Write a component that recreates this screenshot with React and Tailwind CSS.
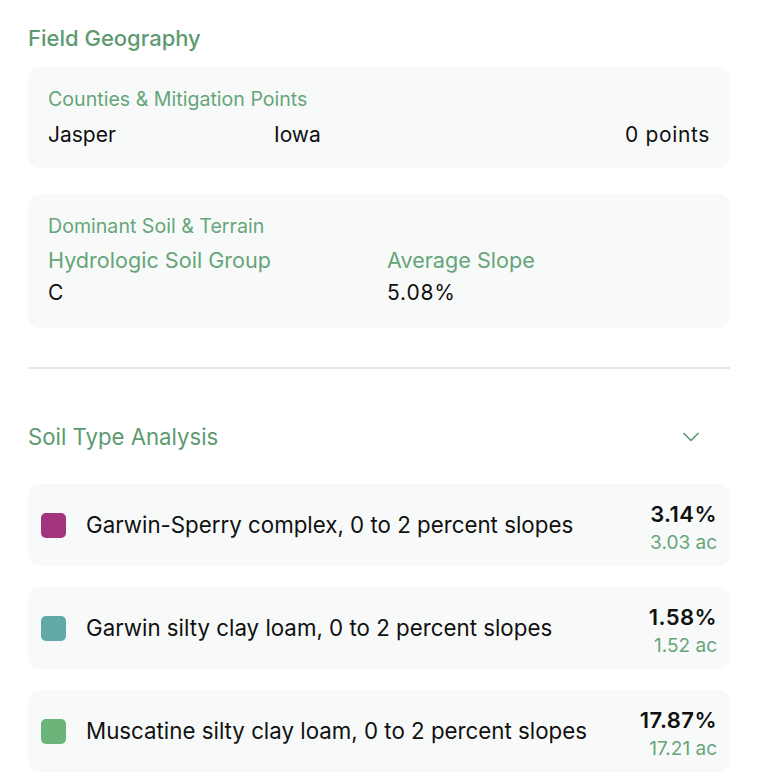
import { ChevronDown } from 'lucide-react';

const soils = [
  { name: 'Garwin-Sperry complex, 0 to 2 percent slopes', pct: '3.14%', ac: '3.03 ac', color: 'bg-[#a2337f]' },
  { name: 'Garwin silty clay loam, 0 to 2 percent slopes', pct: '1.58%', ac: '1.52 ac', color: 'bg-[#62aaa9]' },
  { name: 'Muscatine silty clay loam, 0 to 2 percent slopes', pct: '17.87%', ac: '17.21 ac', color: 'bg-[#6bb57a]' },
];

function SoilRow({ soil }) {
  return (
    <div className="flex items-center justify-between h-[82px] px-[13px] rounded-xl bg-[#f8faf9]">
      <div className="flex items-center gap-5">
        <span className={`w-[25px] h-[25px] rounded-[5px] ${soil.color}`} />
        <span className="text-[22.3px] text-[#111] leading-[30px]">{soil.name}</span>
      </div>
      <div className="flex flex-col items-end pt-2">
        <span className="text-[22px] font-semibold text-[#111] leading-[28px] tracking-[0.02em]">{soil.pct}</span>
        <span className="text-[19px] text-[#66a57a] leading-[30px]">{soil.ac}</span>
      </div>
    </div>
  );
}

export default function App() {
  return (
    <div className="w-[766px] h-[782px] overflow-hidden bg-white pl-7 pr-9 pt-[22px] font-['Inter','Noto_Sans',sans-serif]">
      {/* Field Geography */}
      <h2 className="text-[22px] font-medium text-[#5e9a70] leading-[32px]">Field Geography</h2>

      <div className="mt-[13px] rounded-xl bg-[#f8faf9] px-5 pt-5 pb-[19px]">
        <p className="text-[19.6px] text-[#66a57a] leading-[24px]">Counties &amp; Mitigation Points</p>
        <div className="mt-[10px] grid grid-cols-3 gap-4 text-[21px] text-[#111] leading-[28px]">
          <span>Jasper</span>
          <span>Iowa</span>
          <span className="text-right tracking-[0.03em]">0 points</span>
        </div>
      </div>

      <div className="mt-[26px] rounded-xl bg-[#f8faf9] px-5 pt-5 pb-[21px]">
        <p className="text-[19.6px] text-[#66a57a] leading-[24px]">Dominant Soil &amp; Terrain</p>
        <div className="mt-[8px] grid grid-cols-2 gap-4">
          <div>
            <p className="text-[21.6px] text-[#66a57a] leading-[28px]">Hydrologic Soil Group</p>
            <p className="mt-[5px] text-[21px] text-[#111] leading-[28px]">C</p>
          </div>
          <div>
            <p className="text-[21.6px] text-[#66a57a] leading-[28px]">Average Slope</p>
            <p className="mt-[5px] text-[21px] text-[#111] leading-[28px] tracking-[0.04em]">5.08%</p>
          </div>
        </div>
      </div>

      <div className="mt-[39px] h-[2px] bg-[#e3eae5]" />

      {/* Soil Type Analysis */}
      <div className="mt-[52px] flex items-center justify-between">
        <h2 className="text-[22.2px] text-[#5e9a70] leading-[32px]">Soil Type Analysis</h2>
        <ChevronDown size={28} strokeWidth={1.5} className="mr-[25px] text-[#5e9a70]" />
      </div>

      <div className="mt-[31px] flex flex-col gap-[21px]">
        {soils.map((s) => (
          <SoilRow key={s.name} soil={s} />
        ))}
      </div>
    </div>
  );
}
